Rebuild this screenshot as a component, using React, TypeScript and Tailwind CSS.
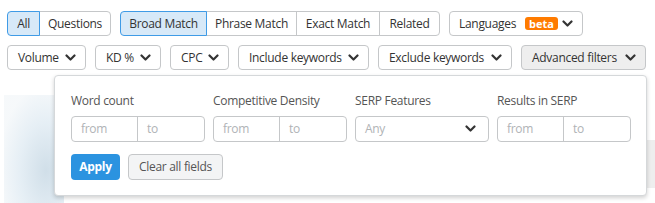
import React from "react";

const Chevron = ({ className = "" }: { className?: string }) => (
  <svg width="11" height="8" viewBox="0 0 11 8" className={"shrink-0 " + className}>
    <path d="M1.5 1.5 L5.5 5.5 L9.5 1.5" fill="none" stroke="#333" strokeWidth="2.2" strokeLinecap="round" strokeLinejoin="round" />
  </svg>
);

const Seg = ({ label, w, active, first, last }: { label: string; w: string; active?: boolean; first?: boolean; last?: boolean }) => (
  <div
    className={
      "h-[25px] flex items-center justify-center text-[12px] text-[#333] border whitespace-nowrap " +
      w +
      " " +
      (active ? "bg-[#d7e9f8] border-[#3f9be6] relative z-10 " : "bg-white border-[#c5c7c9] ") +
      (first ? "rounded-l-[4px] " : "-ml-px ") +
      (last ? "rounded-r-[4px]" : "")
    }
  >
    {label}
  </div>
);

const Drop = ({ label, w, grey }: { label: string; w: string; grey?: boolean }) => (
  <div
    className={
      "h-[25px] flex items-center justify-between pl-[10px] pr-[9px] text-[12px] text-[#333] border rounded-[4px] whitespace-nowrap " +
      w +
      " " +
      (grey ? "bg-[#eeeeee] border-[#c5c7c9]" : "bg-white border-[#c5c7c9]")
    }
  >
    <span>{label}</span>
    <Chevron />
  </div>
);

const Range = () => (
  <div className="flex h-[26px] w-[134px] border border-[#c5c7c9] rounded-[4px] text-[12px] text-[#b0b3b6]">
    <div className="w-1/2 border-r border-[#c5c7c9] flex items-center pl-[9px]">from</div>
    <div className="w-1/2 flex items-center pl-[9px]">to</div>
  </div>
);

export default function App() {
  return (
    <div className="w-[655px] h-[203px] bg-white relative overflow-hidden font-['Open_Sans',sans-serif] tracking-[-0.3px]">
      <div className="pt-[11px] pl-[7px] flex flex-col gap-[9px]">
        <div className="flex gap-[9px]">
          <div className="flex">
            <Seg label="All" w="w-[33px]" active first />
            <Seg label="Questions" w="w-[72px]" last />
          </div>
          <div className="flex">
            <Seg label="Broad Match" w="w-[87px]" active first />
            <Seg label="Phrase Match" w="w-[91px]" />
            <Seg label="Exact Match" w="w-[84px]" />
            <Seg label="Related" w="w-[61px]" last />
          </div>
          <div className="h-[25px] w-[134px] flex items-center pl-[9px] pr-[9px] border border-[#c5c7c9] rounded-[4px] text-[12px] text-[#333] whitespace-nowrap">
            <span>Languages</span>
            <span className="ml-[9px] h-[13px] px-[4px] rounded-[3px] bg-[#ff7b00] text-white font-bold text-[11px] leading-[13px] flex items-center tracking-normal">beta</span>
            <Chevron className="ml-auto" />
          </div>
        </div>
        <div className="flex gap-[9px]">
          <Drop label="Volume" w="w-[79px]" />
          <Drop label="KD %" w="w-[66px]" />
          <Drop label="CPC" w="w-[59px]" />
          <Drop label="Include keywords" w="w-[131px]" />
          <Drop label="Exclude keywords" w="w-[134px]" />
          <Drop label="Advanced filters" w="w-[125px]" grey />
        </div>
      </div>

      {/* faded background content */}
      <div className="flex mt-[25px] h-[108px]">
        <div className="ml-[4px] w-[60px] h-[108px] bg-[radial-gradient(ellipse_at_70%_70%,#cbdbe6_0%,#e3edf4_45%,#f5f8fa_80%)] opacity-90" />
        <div className="flex-1" />
        <div className="w-[10px] h-[48px] mt-[45px] bg-[#eeeeee]" />
      </div>
      <div className="h-[7px] bg-[#f3f3f3] border-t border-[#e4e4e4] flex items-start">
        <div className="ml-[193px] w-[6px] h-[7px] bg-[#cfcfcf]" />
        <div className="ml-[38px] mt-[1px] w-[15px] h-[6px] border border-[#bdbdbd] rounded-[2px]" />
      </div>

      {/* advanced filters panel */}
      <div className="absolute left-[54px] top-[75px] w-[593px] h-[121px] bg-white border border-[#d5d8da] rounded-[4px] shadow-[0_2px_4px_rgba(0,0,0,0.18)] pl-[16px] pt-[17px]">
        <div className="flex gap-[8px]">
          <div className="flex flex-col gap-[7px]">
            <div className="text-[12px] leading-[16px] text-[#555]">Word count</div>
            <Range />
          </div>
          <div className="flex flex-col gap-[7px]">
            <div className="text-[12px] leading-[16px] text-[#555]">Competitive Density</div>
            <Range />
          </div>
          <div className="flex flex-col gap-[7px]">
            <div className="text-[12px] leading-[16px] text-[#555]">SERP Features</div>
            <div className="h-[26px] w-[134px] border border-[#c5c7c9] rounded-[4px] flex items-center justify-between pl-[9px] pr-[12px] text-[12px] text-[#b0b3b6]">
              <span>Any</span>
              <Chevron />
            </div>
          </div>
          <div className="flex flex-col gap-[7px]">
            <div className="text-[12px] leading-[16px] text-[#555]">Results in SERP</div>
            <Range />
          </div>
        </div>
        <div className="flex gap-[8px] mt-[12px]">
          <div className="h-[26px] w-[49px] rounded-[4px] bg-[#2b93e0] text-white font-bold text-[12px] flex items-center justify-center">Apply</div>
          <div className="h-[26px] w-[95px] rounded-[4px] bg-[#f3f4f5] border border-[#c5c7c9] text-[#555] text-[12px] flex items-center justify-center whitespace-nowrap">Clear all fields</div>
        </div>
      </div>
    </div>
  );
}
